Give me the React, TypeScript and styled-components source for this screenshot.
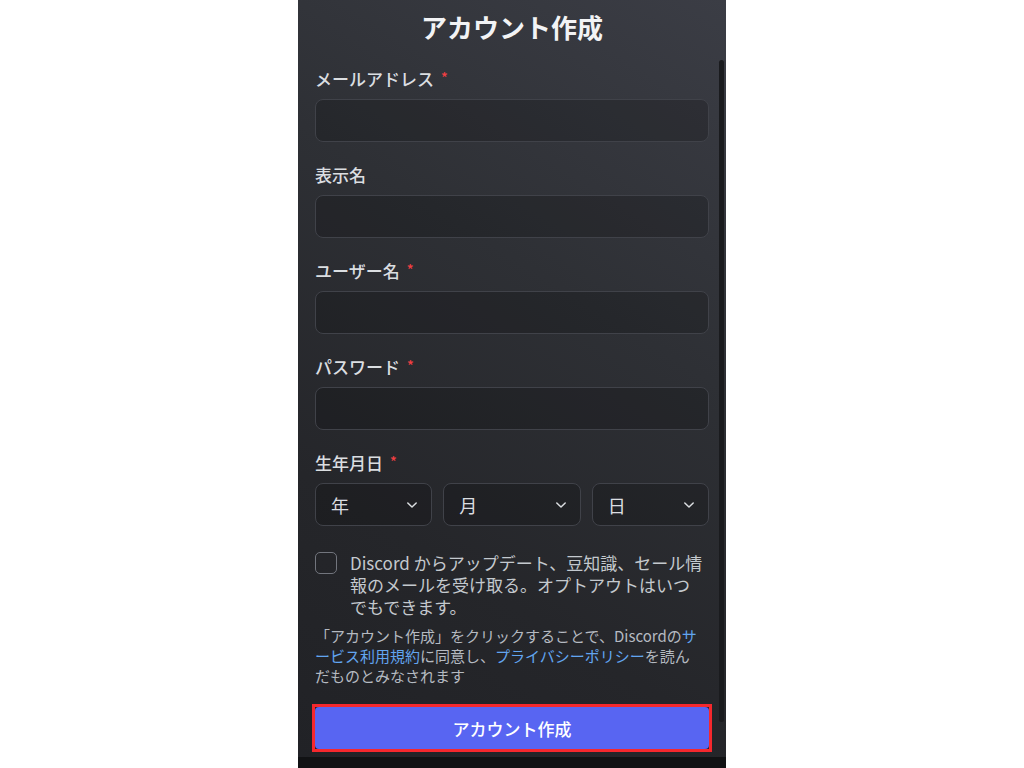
import styled, { createGlobalStyle } from 'styled-components';

const GlobalStyle = createGlobalStyle`
  html, body {
    margin: 0;
    padding: 0;
    background: #ffffff;
  }
  body {
    font-family: "Noto Sans CJK JP", "Noto Sans", sans-serif;
  }
  * {
    box-sizing: border-box;
  }
`;

type FieldProps = {
  label: string;
  required?: boolean;
};

const Field: React.FC<FieldProps> = ({ label, required }) => (
  <FieldBlock>
    <Label>
      {label}
      {required && <Required>*</Required>}
    </Label>
    <Input type="text" />
  </FieldBlock>
);

const Chevron = () => (
  <svg width="12" height="8" viewBox="0 0 12 8" fill="none">
    <path d="M1.8 2 6 6l4.2-4" stroke="#dbdee1" strokeWidth="1.5" strokeLinecap="round" strokeLinejoin="round" />
  </svg>
);

const App = () => {
  return (
    <>
      <GlobalStyle />
      <Screen>
        <Panel>
          <Title>アカウント作成</Title>

          <Field label="メールアドレス" required />
          <Field label="表示名" />
          <Field label="ユーザー名" required />
          <Field label="パスワード" required />

          <FieldBlock>
            <Label>
              生年月日
              <Required>*</Required>
            </Label>
            <DateRow>
              {['年', '月', '日'].map(item => (
                <Select key={item}>
                  <span>{item}</span>
                  <Chevron />
                </Select>
              ))}
            </DateRow>
          </FieldBlock>

          <CheckRow>
            <CheckBox />
            <CheckText>
              Discord からアップデート、豆知識、セール情
              <br />
              報のメールを受け取る。オプトアウトはいつ
              <br />
              でもできます。
            </CheckText>
          </CheckRow>

          <Terms>
            「アカウント作成」をクリックすることで、Discordの<Link>サ<br />ービス利用規約</Link>に同意し、
            <Link>プライバシーポリシー</Link>を読ん
            <br />
            だものとみなされます
          </Terms>

          <Highlight>
            <SubmitButton type="button">アカウント作成</SubmitButton>
          </Highlight>

          <ScrollThumb />
        </Panel>
        <BottomBar />
      </Screen>
    </>
  );
};

const Screen = styled.div`
  display: flex;
  flex-direction: column;

  width: 428px;
  height: 768px;
  margin: 0 auto 0 298px;
`;

const Panel = styled.div`
  display: flex;
  flex-direction: column;
  flex: 1;

  position: relative;
  padding: 10px 17px 0;
  overflow: hidden;

  background: linear-gradient(212deg, #3b3d45 0%, #2e3035 38%, #25262a 72%, #212226 100%);
`;

const Title = styled.h1`
  margin: 0 0 24px;

  font-size: 26px;
  line-height: 34px;
  font-weight: 700;
  text-align: center;
  color: #f2f3f5;
`;

const FieldBlock = styled.div`
  display: flex;
  flex-direction: column;

  margin-bottom: 22px;
`;

const Label = styled.label`
  display: flex;
  align-items: flex-start;

  margin-bottom: 9px;

  font-size: 17px;
  line-height: 22px;
  font-weight: 500;
  color: #dbdee1;
`;

const Required = styled.span`
  padding-left: 7px;

  font-size: 14px;
  line-height: 18px;
  color: #f23f43;
`;

const Input = styled.input`
  height: 43px;
  padding: 0 12px;

  border: 1px solid #404249;
  border-radius: 8px;
  outline: none;

  font-family: inherit;
  font-size: 17px;
  color: #dbdee1;
  background-color: rgba(0, 0, 0, 0.18);
`;

const DateRow = styled.div`
  display: grid;
  grid-template-columns: 1fr 1.17fr 1fr;
  gap: 11px;
`;

const Select = styled.div`
  display: flex;
  align-items: center;
  justify-content: space-between;

  height: 43px;
  padding: 0 13px 0 15px;

  border: 1px solid #404249;
  border-radius: 8px;

  font-size: 18px;
  color: #dbdee1;
  background-color: rgba(0, 0, 0, 0.18);
`;

const CheckRow = styled.div`
  display: flex;
  align-items: flex-start;
  gap: 13px;

  margin-top: 4px;
  margin-bottom: 8px;
`;

const CheckBox = styled.div`
  flex: 0 0 22px;
  width: 22px;
  height: 22px;

  border: 1.5px solid #72757d;
  border-radius: 5px;
`;

const CheckText = styled.p`
  margin: 0;

  font-size: 17px;
  line-height: 22px;
  color: #c4c9ce;
  white-space: nowrap;
`;

const Terms = styled.p`
  margin: 0 0 18px;

  font-size: 15px;
  line-height: 20px;
  color: #b5bac1;
  white-space: nowrap;
`;

const Link = styled.span`
  color: #62a5f0;
`;

const Highlight = styled.div`
  margin: 0 -3px;

  border: 3px solid #f5282d;
`;

const SubmitButton = styled.button`
  display: block;

  width: 100%;
  height: 42px;

  border: 0;
  border-radius: 4px;

  font-family: inherit;
  font-size: 17px;
  font-weight: 500;
  color: #ffffff;
  background-color: #5865f2;
`;

const ScrollThumb = styled.div`
  position: absolute;
  top: 60px;
  right: 2px;

  width: 5px;
  height: 662px;

  border-radius: 3px;
  background-color: #1a1b1e;
`;

const BottomBar = styled.div`
  height: 11px;
  background-color: #111214;
`;

export default App;
